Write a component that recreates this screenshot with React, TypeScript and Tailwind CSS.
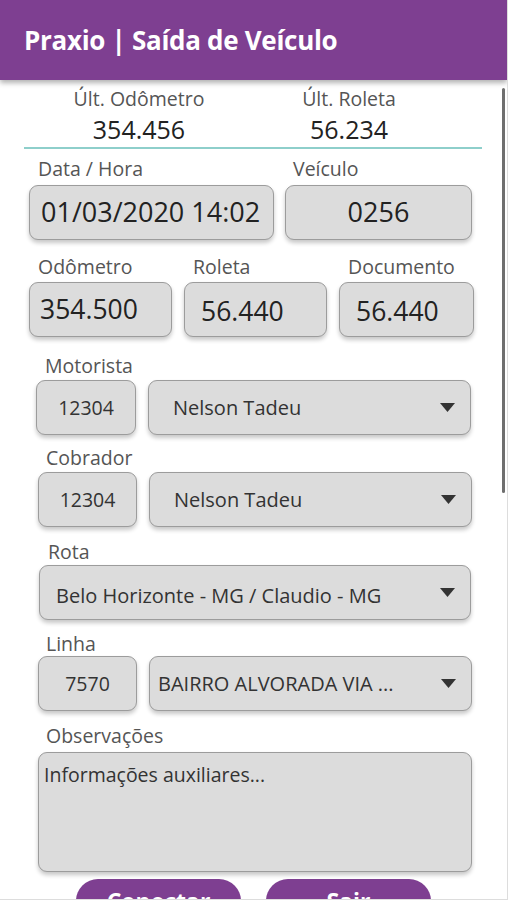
import React from 'react';

const font = { fontFamily: '"Open Sans", "Noto Sans", Arial, sans-serif' };

const box = 'bg-[#dcdcdc] border border-[#9c9c9c] rounded-[9px] shadow-[0_3px_4px_rgba(0,0,0,0.22)]';
const label = 'text-[19.5px] leading-[24px] text-[#555]';

function Caret() {
  return (
    <svg width="15" height="9" viewBox="0 0 15 9" className="shrink-0">
      <path d="M0 0 H15 L7.5 9 Z" fill="#333" />
    </svg>
  );
}

function Select({ text, className, textClass }: { text: string; className: string; textClass: string }) {
  return (
    <div className={`${box} ${className} h-[55px] flex items-center justify-between pr-[15px]`}>
      <span className={`text-[20px] text-[#333] whitespace-nowrap ${textClass}`}>{text}</span>
      <Caret />
    </div>
  );
}

export default function App() {
  return (
    <div style={font} className="relative w-[508px] h-[900px] overflow-hidden bg-white border-r border-b border-[#dddddd]">
      <header className="h-[80px] bg-[#7e3f91] flex items-center px-6 shadow-[0_3px_5px_rgba(0,0,0,0.3)] relative z-10">
        <h1 className="text-white text-[26px] font-bold tracking-[-0.3px]">Praxio | Saída de Veículo</h1>
      </header>

      {/* scrollbar */}
      <div className="absolute left-[502px] top-[88px] w-[3px] h-[405px] bg-[#6f6f6f] rounded-full" />

      <main>
        <div className="ml-[24px] w-[458px] mt-[7px] border-b-2 border-[#8ecfcb] flex">
          <div className="w-[230px] text-center">
            <div className={label}>Últ. Odômetro</div>
            <div className="text-[25px] leading-[36px] text-[#222]">354.456</div>
          </div>
          <div className="w-[190px] text-center">
            <div className={label}>Últ. Roleta</div>
            <div className="text-[25px] leading-[36px] text-[#222]">56.234</div>
          </div>
        </div>

        <div className={`flex mt-[8px] ${label}`}>
          <span className="ml-[38px] w-[255px]">Data / Hora</span>
          <span>Veículo</span>
        </div>
        <div className="flex mt-[4px]">
          <div className={`${box} ml-[29px] w-[245px] h-[55px] flex items-center pl-[11px] text-[27px] text-[#222] whitespace-nowrap`}>01/03/2020 14:02</div>
          <div className={`${box} ml-[11px] w-[187px] h-[55px] flex items-center justify-center text-[27px] text-[#222]`}>0256</div>
        </div>

        <div className={`flex mt-[15px] ${label}`}>
          <span className="ml-[38px] w-[155px]">Odômetro</span>
          <span className="w-[155px]">Roleta</span>
          <span>Documento</span>
        </div>
        <div className="flex mt-[3px]">
          <div className={`${box} ml-[29px] w-[143px] h-[55px] flex items-center pl-[10px] text-[26.5px] text-[#222]`}>354.500</div>
          <div className={`${box} ml-[12px] w-[143px] h-[55px] flex items-center pl-[16px] pt-[4px] text-[26.5px] text-[#222]`}>56.440</div>
          <div className={`${box} ml-[12px] w-[135px] h-[55px] flex items-center pl-[16px] pt-[4px] text-[26.5px] text-[#222]`}>56.440</div>
        </div>

        <div className={`mt-[17px] ml-[45px] ${label}`}>Motorista</div>
        <div className="flex mt-[2px]">
          <div className={`${box} ml-[36px] w-[100px] h-[55px] flex items-center justify-center text-[19.5px] text-[#333]`}>12304</div>
          <Select text="Nelson Tadeu" className="ml-[12px] w-[323px]" textClass="ml-[24px]" />
        </div>

        <div className={`mt-[11px] ml-[46px] ${label}`}>Cobrador</div>
        <div className="flex mt-[2px]">
          <div className={`${box} ml-[38px] w-[99px] h-[55px] flex items-center justify-center text-[19.5px] text-[#333]`}>12304</div>
          <Select text="Nelson Tadeu" className="ml-[12px] w-[323px]" textClass="ml-[24px]" />
        </div>

        <div className={`mt-[13px] ml-[48px] ${label}`}>Rota</div>
        <div className="flex mt-[1px]">
          <Select text="Belo Horizonte - MG / Claudio - MG" className="ml-[39px] w-[432px]" textClass="ml-[16px] pt-[6px]" />
        </div>

        <div className={`mt-[12px] ml-[46px] ${label}`}>Linha</div>
        <div className="flex">
          <div className={`${box} ml-[38px] w-[99px] h-[55px] flex items-center justify-center text-[19.5px] text-[#333]`}>7570</div>
          <Select text="BAIRRO ALVORADA VIA ..." className="ml-[12px] w-[323px]" textClass="ml-[8px]" />
        </div>

        <div className={`mt-[13px] ml-[46px] ${label}`}>Observações</div>
        <div className={`${box} mt-[4px] ml-[38px] w-[434px] h-[120px] px-[5px] pt-[8px] text-[19.5px] leading-[28px] text-[#333]`}>
          Informações auxiliares...
        </div>

        <div className="flex mt-[7px]">
          <button className="ml-[76px] w-[165px] h-[44px] rounded-full bg-[#7e3f91] text-white text-[23px] font-bold">Conectar</button>
          <button className="ml-[25px] w-[165px] h-[44px] rounded-full bg-[#7e3f91] text-white text-[23px] font-bold">Sair</button>
        </div>
      </main>
    </div>
  );
}
